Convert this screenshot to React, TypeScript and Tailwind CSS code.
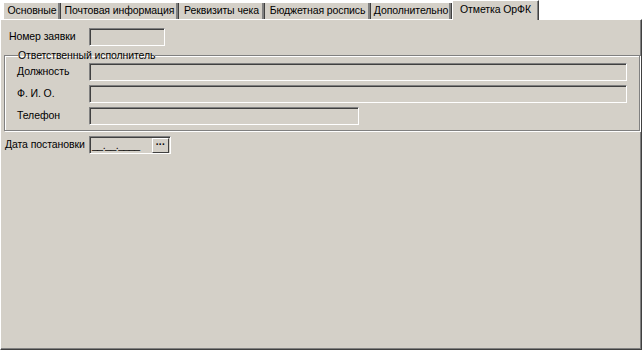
const tabs = [
  { label: "Основные", w: "w-[57px]" },
  { label: "Почтовая информация", w: "w-[118px]" },
  { label: "Реквизиты чека", w: "w-[86px]" },
  { label: "Бюджетная роспись", w: "w-[106px]" },
  { label: "Дополнительно", w: "w-[81px]" },
];

function Field({ w }: { w: string }) {
  return (
    <div
      className={`${w} h-[18px] border border-t-[#808080] border-l-[#808080] border-b-white border-r-white bg-[#d4d0c8] shadow-[inset_1px_1px_0_#404040]`}
    />
  );
}

function Row({ label, labelW, w }: { label: string; labelW: string; w: string }) {
  return (
    <div className="flex items-center">
      <span className={`${labelW} shrink-0 whitespace-nowrap`}>{label}</span>
      <Field w={w} />
    </div>
  );
}

export default function App() {
  return (
    <div
      className="flex h-[352px] w-[642px] flex-col whitespace-nowrap bg-white text-[10.5px] tracking-[-0.1px] text-black"
      style={{ fontFamily: '"Liberation Sans", Arial, sans-serif' }}
    >
      <div className="flex h-[19px] items-end pl-[4px]">
        {tabs.map((t) => (
          <div
            key={t.label}
            className={`${t.w} flex h-[16px] items-center justify-center border-r border-r-[#404040] bg-[#d4d0c8] shadow-[inset_-2px_0_0_#808080]`}
          >
            {t.label}
          </div>
        ))}
        <div className="relative z-10 -mb-[1px] flex h-[20px] w-[87px] items-center justify-center border-t border-l border-r border-t-white border-l-white border-r-[#404040] bg-[#d4d0c8] pb-[2px] shadow-[inset_-1px_0_0_#808080]">
          Отметка ОрФК
        </div>
      </div>

      <div className="flex h-[331px] flex-col border border-t-white border-l-white border-r-[#404040] border-b-[#404040] bg-[#d4d0c8] shadow-[inset_-1px_-1px_0_#808080]">
        <div className="mt-[8px] pl-[8px]">
          <Row label="Номер заявки" labelW="w-[80px]" w="w-[76px]" />
        </div>

        <fieldset className="mx-[3px] mt-[2px] h-[83px] w-[633px] border border-[#808080] px-[12px] shadow-[inset_1px_1px_0_#fff,1px_1px_0_#fff]">
          <legend className="ml-[1px] px-0">Ответственный исполнитель</legend>
          <div className="-mt-[1px] flex flex-col gap-[4px]">
            <Row label="Должность" labelW="w-[72px]" w="w-[538px]" />
            <Row label="Ф. И. О." labelW="w-[72px]" w="w-[538px]" />
            <Row label="Телефон" labelW="w-[72px]" w="w-[270px]" />
          </div>
        </fieldset>

        <div className="mt-[5px] flex items-center pl-[4px]">
          <span className="w-[84px] shrink-0 whitespace-nowrap">Дата постановки</span>
          <div className="flex h-[18px] w-[82px] items-center border border-t-[#808080] border-l-[#808080] border-b-white border-r-white bg-[#d4d0c8] shadow-[inset_1px_1px_0_#404040]">
            <span className="flex-1 pl-[2px] leading-none tracking-[-0.5px]">__.__.____</span>
            <div className="mr-[1px] flex h-[15px] w-[17px] items-center justify-center border border-t-white border-l-white border-r-[#404040] border-b-[#404040] text-[10px] font-bold leading-none">
              ···
            </div>
          </div>
        </div>
      </div>
    </div>
  );
}
